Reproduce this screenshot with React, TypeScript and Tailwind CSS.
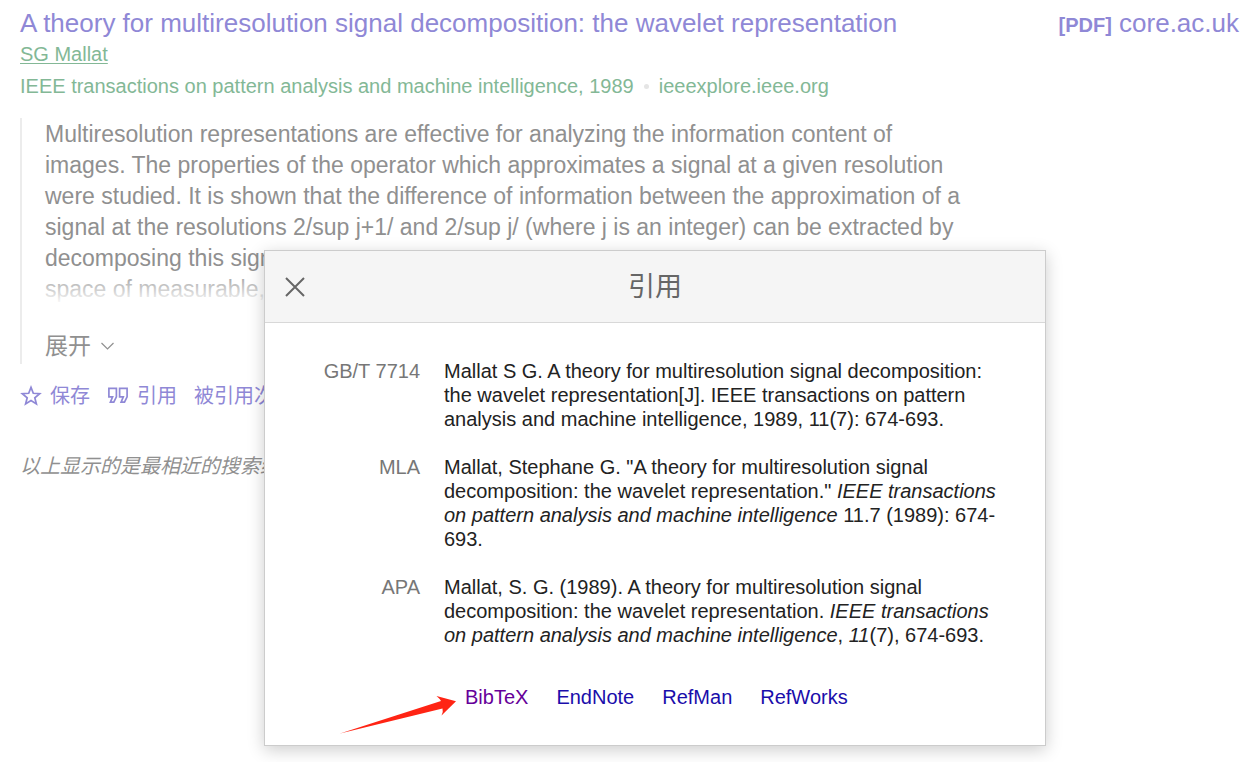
import React from "react";

const abstractLines = [
  "Multiresolution representations are effective for analyzing the information content of",
  "images. The properties of the operator which approximates a signal at a given resolution",
  "were studied. It is shown that the difference of information between the approximation of a",
  "signal at the resolutions 2/sup j+1/ and 2/sup j/ (where j is an integer) can be extracted by",
  "decomposing this sign",
  "space of measurable,",
];

const citations: { style: string; text: React.ReactNode }[] = [
  {
    style: "GB/T 7714",
    text: (
      <>
        Mallat S G. A theory for multiresolution signal decomposition:
        <br />
        the wavelet representation[J]. IEEE transactions on pattern
        <br />
        analysis and machine intelligence, 1989, 11(7): 674-693.
      </>
    ),
  },
  {
    style: "MLA",
    text: (
      <>
        Mallat, Stephane G. "A theory for multiresolution signal
        <br />
        decomposition: the wavelet representation." <i>IEEE transactions</i>
        <br />
        <i>on pattern analysis and machine intelligence</i> 11.7 (1989): 674-
        <br />
        693.
      </>
    ),
  },
  {
    style: "APA",
    text: (
      <>
        Mallat, S. G. (1989). A theory for multiresolution signal
        <br />
        decomposition: the wavelet representation. <i>IEEE transactions</i>
        <br />
        <i>on pattern analysis and machine intelligence</i>, <i>11</i>(7), 674-693.
      </>
    ),
  },
];

function StarIcon() {
  return (
    <svg className="size-[22px]" viewBox="0 0 22 22" fill="none" stroke="currentColor" strokeWidth="1.7" aria-hidden="true">
      <path d="M11 2.4 13.3 8.3 19.7 8.7 14.8 12.8 16.4 19 11 15.6 5.6 19 7.2 12.8 2.3 8.7 8.7 8.3Z" />
    </svg>
  );
}

function QuoteIcon() {
  return (
    <svg className="size-[22px]" viewBox="0 0 22 22" fill="none" stroke="currentColor" strokeWidth="1.7" aria-hidden="true">
      <path d="M1.9 3.4H9.4V11.8L6.8 17.2H3.4L5.6 11.8H1.9Z" />
      <path d="M12.6 3.4H20.1V11.8L17.5 17.2H14.1L16.3 11.8H12.6Z" />
    </svg>
  );
}

function Result() {
  return (
    <main className="px-5 pt-2">
      <div className="flex items-start justify-between">
        <h3 className="text-[26px] leading-[30px] text-[#8f88d6]">
          <a href="#paper">A theory for multiresolution signal decomposition: the wavelet representation</a>
        </h3>
        <a href="#pdf" className="-mr-2 text-[26px] leading-[30px] whitespace-nowrap text-[#8f88d6]">
          <b className="text-[20px]">[PDF]</b> core.ac.uk
        </a>
      </div>
      <div className="-mt-0.5 text-[20px] leading-8 text-[#83b896]">
        <div>
          <a href="#author" className="underline decoration-1 underline-offset-2">SG Mallat</a>
        </div>
        <div className="flex items-center">
          <span>IEEE transactions on pattern analysis and machine intelligence, 1989</span>
          <span className="mx-2.5 size-[5px] rounded-full bg-[#e5e5e5]" />
          <span>ieeexplore.ieee.org</span>
        </div>
      </div>
      <div className="mt-4 border-l-2 border-[#ececec] pt-px pl-[23px] text-[#909090]">
        <p className="relative text-[23px] leading-[31px] whitespace-nowrap">
          {abstractLines.map((line) => (
            <span key={line} className="block">{line}</span>
          ))}
          <span className="absolute inset-x-0 bottom-0 h-9 bg-linear-to-b from-white/0 to-white" />
        </p>
        <button type="button" className="mt-[23px] flex h-9 items-center gap-2.5 text-[23px]">
          展开
          <svg className="h-2 w-[13px]" viewBox="0 0 13 8" fill="none" stroke="currentColor" strokeWidth="1.2" aria-hidden="true">
            <path d="M.5 1 6.5 7 12.5 1" />
          </svg>
        </button>
      </div>
      <div className="mt-4 flex h-8 items-center gap-[17px] text-[20px] whitespace-nowrap text-[#8f88d6]">
        <button type="button" className="flex items-center gap-2">
          <StarIcon />
          保存
        </button>
        <button type="button" className="flex items-center gap-2">
          <QuoteIcon />
          引用
        </button>
        <a href="#cited">被引用次数</a>
      </div>
      <p className="mt-[38px] text-[20px] leading-8 whitespace-nowrap text-[#909090] italic">以上显示的是最相近的搜索结果</p>
    </main>
  );
}

function CiteDialog() {
  return (
    <section
      role="dialog"
      aria-labelledby="cite-title"
      className="absolute top-[250px] left-[264px] w-[782px] border border-[#cccccc] bg-white shadow-[0_4px_16px_rgba(0,0,0,0.2)]"
    >
      <header className="grid h-[72px] grid-cols-[60px_1fr_60px] items-center border-b border-[#d8d8d8] bg-[#f5f5f5] text-[#666666]">
        <button type="button" aria-label="关闭" className="flex h-full items-center justify-center">
          <svg className="size-5" viewBox="0 0 20 20" fill="none" stroke="currentColor" strokeWidth="2" aria-hidden="true">
            <path d="M1 1 19 19M19 1 1 19" />
          </svg>
        </button>
        <h2 id="cite-title" className="text-center text-[27px] leading-9">引用</h2>
      </header>
      <table className="mt-6 w-full text-[20px] leading-6">
        <tbody>
          {citations.map((c) => (
            <tr key={c.style} className="align-top">
              <th scope="row" className="w-[155px] py-3 text-right font-normal whitespace-nowrap text-[#777777]">
                {c.style}
              </th>
              <td className="py-3 pl-6 whitespace-nowrap text-[#222222]">{c.text}</td>
            </tr>
          ))}
        </tbody>
      </table>
      <nav className="mt-[26px] mb-9 ml-[200px] flex gap-7 text-[20px] leading-6 text-[#1a0dab]">
        <a href="#bibtex" className="text-[#660099]">BibTeX</a>
        <a href="#endnote">EndNote</a>
        <a href="#refman">RefMan</a>
        <a href="#refworks">RefWorks</a>
      </nav>
      <svg className="absolute bottom-[11px] left-[75px] h-10 w-[117px]" viewBox="0 0 117 40" fill="#ff2414" aria-hidden="true">
        <path d="M0 39.5 101 7Q99.500 4.500 96.500 2L116 7.200L101.500 21.500Q103.500 18 102.500 14.500Z" />
      </svg>
    </section>
  );
}

export default function App() {
  return (
    <div className="relative min-h-screen overflow-hidden bg-white font-['Liberation_Sans','Noto_Sans_CJK_SC',sans-serif]">
      <Result />
      <CiteDialog />
    </div>
  );
}
